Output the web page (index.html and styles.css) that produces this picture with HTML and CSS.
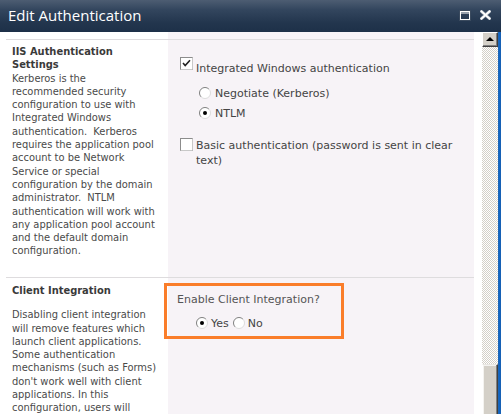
FILE: index.html
```html
<!DOCTYPE html>
<html>
<head>
<meta charset="utf-8">
<link rel="stylesheet" href="styles.css">
</head>
<body>
<div class="window">
  <div class="titlebar">
    <span class="title">Edit Authentication</span>
    <span class="tb-icons">
      <svg class="tb-max" width="12" height="11" viewBox="0 0 12 11"><rect x="0.5" y="0.5" width="11" height="10" fill="none" stroke="#3a4a5e"/><rect x="1.5" y="1.5" width="9" height="8" fill="none" stroke="#fff"/><rect x="1.5" y="2.5" width="9" height="1" fill="#fff"/></svg>
      <svg class="tb-close" width="11" height="10" viewBox="0 0 11 10"><path d="M1.5 1.5 L9.5 8.5 M9.5 1.5 L1.5 8.5" stroke="#8a96a5" stroke-width="3.2" stroke-linecap="square"/><path d="M1.5 1.5 L9.5 8.5 M9.5 1.5 L1.5 8.5" stroke="#fff" stroke-width="2" stroke-linecap="square"/></svg>
    </span>
  </div>
  <div class="main">
    <div class="content">
      <div class="row spacer"><div class="lc"></div><div class="rc"></div></div>
      <div class="row sec1">
        <div class="lc">
          <h3 class="head">IIS Authentication<br>Settings</h3>
          <p class="desc">Kerberos is the<br>recommended security<br>configuration to use with<br>Integrated Windows<br>authentication.&nbsp; Kerberos<br>requires the application pool<br>account to be Network<br>Service or special<br>configuration by the domain<br>administrator.&nbsp; NTLM<br>authentication will work with<br>any application pool account<br>and the default domain<br>configuration.</p>
        </div>
        <div class="rc">
          <div class="opt opt-iwa">
            <svg class="cb" width="13" height="13" viewBox="0 0 13 13"><rect x="0.5" y="0.5" width="12" height="12" fill="#fff" stroke="#8c8c8c"/><path d="M0.5 12.5 H12.5 V0.5" fill="none" stroke="#c8c8c8"/><polyline points="3,6 5.2,8.5 10,3.2" fill="none" stroke="#222" stroke-width="1.6"/></svg>
            <span class="lbl">Integrated Windows authentication</span>
          </div>
          <div class="radios">
            <div class="ropt">
              <svg class="radio" width="12" height="12" viewBox="0 0 12 12"><circle cx="6" cy="6" r="5.5" fill="#fff"/><path d="M2.1 9.9 A5.5 5.5 0 0 1 9.9 2.1" stroke="#808080" fill="none"/><path d="M9.9 2.1 A5.5 5.5 0 0 1 2.1 9.9" stroke="#dcdcdc" fill="none"/></svg>
              <span class="lbl">Negotiate (Kerberos)</span>
            </div>
            <div class="ropt">
              <svg class="radio" width="12" height="12" viewBox="0 0 12 12"><circle cx="6" cy="6" r="5.5" fill="#fff"/><path d="M2.1 9.9 A5.5 5.5 0 0 1 9.9 2.1" stroke="#808080" fill="none"/><path d="M9.9 2.1 A5.5 5.5 0 0 1 2.1 9.9" stroke="#dcdcdc" fill="none"/><circle cx="6" cy="6" r="2" fill="#000"/></svg>
              <span class="lbl">NTLM</span>
            </div>
          </div>
          <div class="opt opt-basic">
            <svg class="cb" width="13" height="13" viewBox="0 0 13 13"><rect x="0.5" y="0.5" width="12" height="12" fill="#fff" stroke="#8c8c8c"/><path d="M0.5 12.5 H12.5 V0.5" fill="none" stroke="#c8c8c8"/></svg>
            <span class="lbl">Basic authentication (password is sent in clear<br>text)</span>
          </div>
        </div>
      </div>
      <div class="row sec2">
        <div class="lc">
          <h3 class="head">Client Integration</h3>
          <p class="desc desc2">Disabling client integration<br>will remove features which<br>launch client applications.<br>Some authentication<br>mechanisms (such as Forms)<br>don't work well with client<br>applications. In this<br>configuration, users will<br>need to work on documents</p>
        </div>
        <div class="rc rc2">
          <div class="q">Enable Client Integration?</div>
          <div class="yn">
            <svg class="radio" width="12" height="12" viewBox="0 0 12 12"><circle cx="6" cy="6" r="5.5" fill="#fff"/><path d="M2.1 9.9 A5.5 5.5 0 0 1 9.9 2.1" stroke="#808080" fill="none"/><path d="M9.9 2.1 A5.5 5.5 0 0 1 2.1 9.9" stroke="#dcdcdc" fill="none"/><circle cx="6" cy="6" r="2" fill="#000"/></svg>
            <span class="lbl">Yes</span>
            <svg class="radio" width="12" height="12" viewBox="0 0 12 12"><circle cx="6" cy="6" r="5.5" fill="#fff"/><path d="M2.1 9.9 A5.5 5.5 0 0 1 9.9 2.1" stroke="#808080" fill="none"/><path d="M9.9 2.1 A5.5 5.5 0 0 1 2.1 9.9" stroke="#dcdcdc" fill="none"/></svg>
            <span class="lbl">No</span>
          </div>
          <div class="highlight"></div>
        </div>
      </div>
    </div>
    <div class="scrollbar">
      <div class="sb-up"><span class="arrow"></span></div>
      <div class="sb-track"></div>
      <div class="sb-thumb"></div>
    </div>
    <div class="edge"></div>
  </div>
</div>
</body>
</html>
```
FILE: styles.css
```css
html, body {
  margin: 0;
  padding: 0;
  background: #fff;
}
.window {
  width: 501px;
  height: 414px;
  overflow: hidden;
  display: flex;
  flex-direction: column;
}
.titlebar {
  height: 32px;
  flex: none;
  display: flex;
  align-items: center;
  justify-content: space-between;
  padding: 0 10px 2px 8px;
  box-sizing: border-box;
  background: linear-gradient(to bottom, #4d5d72 0%, #33465e 30%, #23364e 70%, #1d3048 100%);
}
.title {
  font-family: "Open Sans", "DejaVu Sans", sans-serif;
  font-size: 15px;
  color: #fff;
}
.tb-icons {
  display: flex;
  align-items: center;
  gap: 9px;
}
.tb-icons svg { display: block; }
.main {
  flex: 1;
  display: flex;
  min-height: 0;
}
.content {
  width: 482px;
  flex: none;
  overflow: hidden;
  background: #fff;
}
.row {
  margin-left: 6px;
  width: 468px;
  display: grid;
  grid-template-columns: 162px 306px;
}
.spacer { height: 7px; }
.sec1, .sec2 { border-top: 1px solid #dedcde; }
.sec1 { height: 237px; }
.rc {
  background: #f7f3f7;
  position: relative;
}
.lc {
  padding-left: 6px;
  font-family: "DejaVu Sans Condensed", "DejaVu Sans", sans-serif;
  font-stretch: condensed;
  font-size: 11px;
  line-height: 13.3px;
  color: #4a4a4a;
}
.head {
  margin: 0;
  padding-top: 5px;
  font-size: 11px;
  font-weight: bold;
  color: #3a3a3a;
}
.desc { margin: 0; }
.sec2 .head { padding-top: 6px; }
.desc2 { margin-top: 11px; }

.rc, .q, .lbl {
  font-family: "DejaVu Sans", sans-serif;
  font-size: 11px;
  color: #444;
}
.sec1 .rc { padding-left: 12px; }
.opt { display: flex; align-items: flex-start; }
.cb { display: block; flex: none; }
.opt .lbl { margin-left: 3px; line-height: 14px; }
.opt-iwa { margin-top: 17px; }
.opt-iwa .lbl { padding-top: 5px; }
.radios { padding-left: 19px; margin-top: 9px; }
.ropt {
  display: flex;
  align-items: center;
  height: 16px;
  margin-bottom: 4px;
}
.radio { display: block; flex: none; }
.ropt .lbl { margin-left: 4px; }
.opt-basic { margin-top: 17px; }
.opt-basic .lbl { margin-top: 0; line-height: 15px; }

.rc2 { padding-left: 9px; }
.q { margin-top: 15px; line-height: 13px; color: #555; }
.yn {
  display: flex;
  align-items: center;
  height: 16px;
  margin-top: 9px;
  padding-left: 19px;
}
.yn .lbl { margin: 0 4px 0 3px; }
.highlight {
  position: absolute;
  left: -4px;
  top: 5px;
  width: 180px;
  height: 56px;
  box-sizing: border-box;
  border: 3px solid #fa7d2a;
  pointer-events: none;
}

.scrollbar {
  width: 16px;
  flex: none;
  display: flex;
  flex-direction: column;
}
.sb-up {
  height: 15px;
  flex: none;
  box-sizing: border-box;
  background: #d4d0c8;
  border-top: 1px solid #fff;
  border-left: 1px solid #fff;
  border-right: 1px solid #404040;
  border-bottom: 1px solid #404040;
  box-shadow: inset -1px -1px 0 #808080;
  display: flex;
  align-items: center;
  justify-content: center;
}
.arrow {
  width: 0;
  height: 0;
  border-left: 4px solid transparent;
  border-right: 4px solid transparent;
  border-bottom: 4px solid #000;
  margin-top: -1px;
}
.sb-track {
  flex: 1;
  background-color: #fff;
  background-image: conic-gradient(#d4d0c8 25%, #fff 0 50%, #d4d0c8 0 75%, #fff 0);
  background-size: 2px 2px;
}
.sb-thumb {
  height: 50px;
  flex: none;
  box-sizing: border-box;
  background: #d4d0c8;
  border-top: 1px solid #e8e6e2;
  border-left: 1px solid #fff;
  border-right: 1px solid #404040;
  box-shadow: inset -1px 0 0 #808080, inset 1px 1px 0 #f4f3f0;
}
.edge {
  width: 3px;
  flex: none;
  background: linear-gradient(to right, #2466b0, #0a64c8 60%, #1e5ea8);
}
```
